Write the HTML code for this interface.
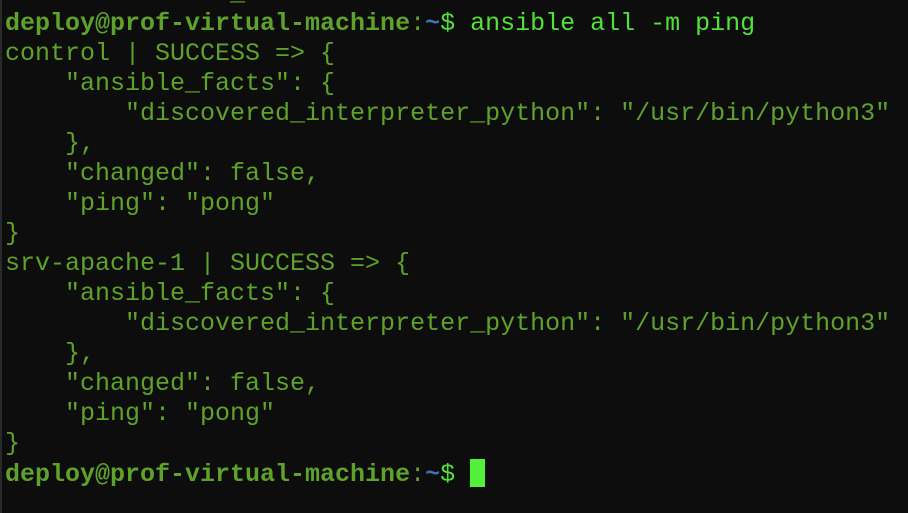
<html><head><style>
body{margin:0;width:908px;height:513px;background:#0d0d0d;overflow:hidden;position:relative}
pre{position:absolute;left:5px;top:-21px;margin:0;font-family:"Liberation Mono",monospace;font-size:25px;line-height:30px;color:#5ea22b;letter-spacing:0}
b{color:#5ea22b}
.c{color:#5ea22b}.t{color:#3f72b5}.d{color:#52e13a}
.l{position:absolute;left:0;top:0;width:2px;height:513px;background:#2a2a2a}
.cur{display:inline-block;width:15px;height:28px;background:#52f03a;vertical-align:-6px}
</style></head><body><div class="l"></div><pre>control ansible_connection=local
<b>deploy@prof-virtual-machine</b>:<b class="t">~</b><span class="d">$ ansible all -m ping</span>
control | SUCCESS =&gt; {
    "ansible_facts": {
        "discovered_interpreter_python": "/usr/bin/python3"
    },
    "changed": false,
    "ping": "pong"
}
srv-apache-1 | SUCCESS =&gt; {
    "ansible_facts": {
        "discovered_interpreter_python": "/usr/bin/python3"
    },
    "changed": false,
    "ping": "pong"
}
<b>deploy@prof-virtual-machine</b>:<b class="t">~</b><span class="d">$ <span class="cur"></span></span></pre></body></html>
